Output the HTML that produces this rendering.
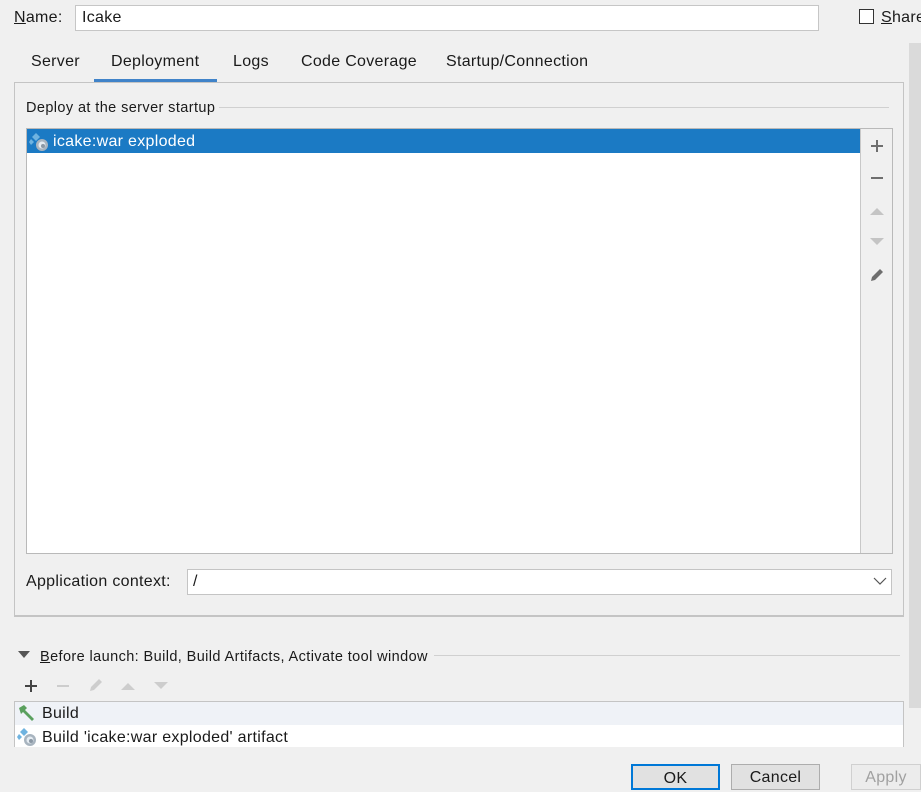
<!DOCTYPE html>
<html><head><style>
*{margin:0;padding:0;box-sizing:border-box}
body{width:921px;height:783px;background:#f0f0f0;position:relative;overflow:hidden;font-family:"Liberation Sans","Noto Sans CJK SC",sans-serif;font-size:16px;letter-spacing:0.3px;color:#1a1a1a}
.a{position:absolute}
.t{position:absolute;white-space:nowrap;line-height:18px}
.s{font-size:14.5px;letter-spacing:0.4px}
.btn{position:absolute;height:26px;background:#e1e1e1;border:1px solid #adadad;text-align:center;line-height:26px;top:764px}
</style></head><body>
<div class="t" style="left:14px;top:9px"><u>N</u>ame:</div>
<div class="a" style="left:75px;top:5px;width:744px;height:26px;background:#fff;border:1px solid #c6c6c6"></div>
<div class="t" style="left:82px;top:9px">Icake</div>
<div class="a" style="left:859px;top:9px;width:15px;height:15px;border:1px solid #333;background:#fff"></div>
<div class="t" style="left:881px;top:9px"><u>S</u>hare</div>

<div class="t" style="left:31px;top:53px">Server</div>
<div class="t" style="left:111px;top:53px">Deployment</div>
<div class="t" style="left:233px;top:53px">Logs</div>
<div class="t" style="left:301px;top:53px">Code Coverage</div>
<div class="t" style="left:446px;top:53px">Startup/Connection</div>
<div class="a" style="left:94px;top:79px;width:123px;height:3px;background:#4083c9"></div>

<div class="a" style="left:14px;top:82px;width:890px;height:535px;border:1px solid #c4c4c4;border-bottom:2px solid #c4c4c4"></div>
<div class="t s" style="left:26px;top:99px">Deploy at the server startup</div>
<div class="a" style="left:219px;top:107px;width:670px;height:1px;background:#d0d0d0"></div>

<div class="a" style="left:26px;top:128px;width:867px;height:426px;border:1px solid #b9b9b9;background:#f0f0f0"></div>
<div class="a" style="left:27px;top:129px;width:834px;height:424px;background:#fff;border-right:1px solid #c8c8c8"></div>
<div class="a" style="left:27px;top:129px;width:833px;height:24px;background:#1b7ac4"></div>
<svg class="a" style="left:29px;top:132px" width="20" height="20" viewBox="0 0 20 20"><path d="M7 1l4 4-4 4-4-4z" fill="#6fb3e0"/><path d="M2 7l3 3-3 3-2-3z" fill="#6fb3e0"/><circle cx="13" cy="13" r="6" fill="#a8b4bf"/><circle cx="13" cy="13" r="3.5" fill="#e5ecf2"/><circle cx="14" cy="14" r="2" fill="#8b98a5"/></svg>
<div class="t" style="left:53px;top:133px;color:#fff">icake:war exploded</div>
<svg class="a" style="left:869px;top:138px" width="16" height="16"><path d="M2 8h12M8 2v12" stroke="#6e6e6e" stroke-width="2"/></svg>
<svg class="a" style="left:869px;top:170px" width="16" height="16"><path d="M2 8h12" stroke="#6e6e6e" stroke-width="2"/></svg>
<svg class="a" style="left:869px;top:205px" width="16" height="12"><path d="M1 10L8 3l7 7z" fill="#c4c4c4"/></svg>
<svg class="a" style="left:869px;top:236px" width="16" height="12"><path d="M1 2h14L8 9z" fill="#c4c4c4"/></svg>
<svg class="a" style="left:868px;top:266px" width="18" height="18"><path d="M3 15l1-4 8-8 3 3-8 8z" fill="#6e6e6e"/></svg>

<div class="t" style="left:26px;top:573px">Application context:</div>
<div class="a" style="left:187px;top:569px;width:705px;height:26px;background:#fff;border:1px solid #c4c4c4"></div>
<div class="t" style="left:193px;top:573px">/</div>
<svg class="a" style="left:873px;top:576px" width="14" height="10"><path d="M1 2l6 6 6-6" stroke="#555" fill="none" stroke-width="1.2"/></svg>

<svg class="a" style="left:18px;top:651px" width="12" height="8"><path d="M0 0h12L6 7z" fill="#555"/></svg>
<div class="t s" style="left:40px;top:648px"><u>B</u>efore launch: Build, Build Artifacts, Activate tool window</div>
<div class="a" style="left:434px;top:655px;width:466px;height:1px;background:#d0d0d0"></div>
<svg class="a" style="left:23px;top:678px" width="16" height="16"><path d="M2 8h12M8 2v12" stroke="#444" stroke-width="2"/></svg>
<svg class="a" style="left:55px;top:678px" width="16" height="16"><path d="M2 8h12" stroke="#cdcdcd" stroke-width="2"/></svg>
<svg class="a" style="left:87px;top:676px" width="18" height="18"><path d="M3 15l1-4 8-8 3 3-8 8z" fill="#cdcdcd"/></svg>
<svg class="a" style="left:120px;top:681px" width="16" height="10"><path d="M1 9L8 2l7 7z" fill="#cdcdcd"/></svg>
<svg class="a" style="left:153px;top:681px" width="16" height="10"><path d="M1 1h14L8 8z" fill="#cdcdcd"/></svg>

<div class="a" style="left:14px;top:701px;width:890px;height:46px;border:1px solid #c4c4c4;border-bottom:none;background:#fff"></div>
<div class="a" style="left:15px;top:702px;width:888px;height:23px;background:#eff2f7"></div>
<svg class="a" style="left:17px;top:703px" width="20" height="20"><path d="M2 5l5-3 3 3-2 2 9 9-2 2-9-9-2 2z" fill="#5aa05e"/></svg>
<div class="t" style="left:42px;top:705px">Build</div>
<svg class="a" style="left:17px;top:727px" width="20" height="20" viewBox="0 0 20 20"><path d="M7 1l4 4-4 4-4-4z" fill="#6fb3e0"/><path d="M2 7l3 3-3 3-2-3z" fill="#6fb3e0"/><circle cx="13" cy="13" r="6" fill="#a8b4bf"/><circle cx="13" cy="13" r="3.5" fill="#e5ecf2"/><circle cx="14" cy="14" r="2" fill="#8b98a5"/></svg>
<div class="t" style="left:42px;top:729px">Build 'icake:war exploded' artifact</div>

<div class="a" style="left:909px;top:43px;width:12px;height:665px;background:#dadada"></div>

<div class="btn" style="left:631px;width:89px;border:2px solid #0078d7">OK</div>
<div class="btn" style="left:731px;width:89px">Cancel</div>
<div class="btn" style="left:851px;width:70px;background:#ececec;border-color:#d0d0d0;color:#a0a0a0">Apply</div>
</body></html>
